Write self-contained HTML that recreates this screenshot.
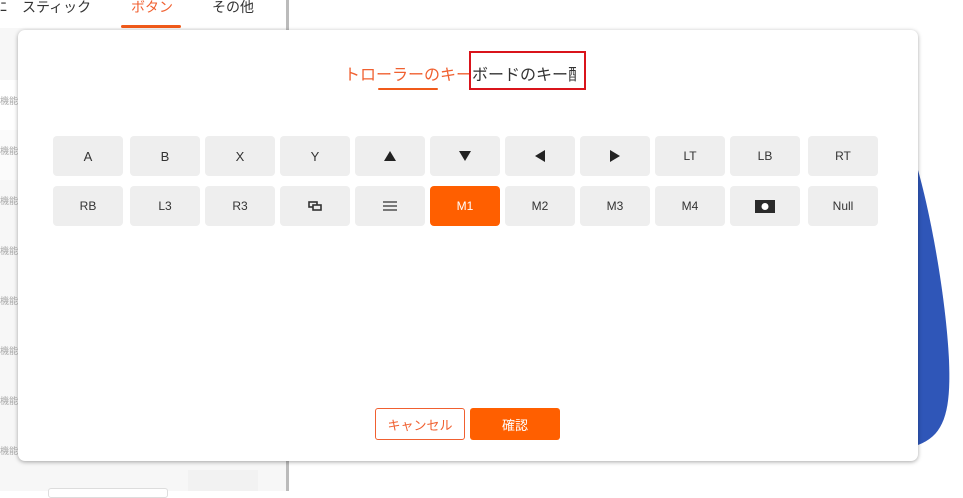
<!DOCTYPE html>
<html><head><meta charset="utf-8"><style>
*{margin:0;padding:0;box-sizing:border-box}
body{width:963px;height:491px;overflow:hidden;background:#fff;position:relative;font-family:"Liberation Sans","Noto Sans CJK JP",sans-serif}
.abs{position:absolute}
.tab{top:-1px;font-size:14px;color:#333;line-height:16px}
.lbl{left:0;font-size:9px;color:#aaa}
.btn{position:absolute;width:70px;height:40px;background:#eee;border-radius:4px;font-size:13px;color:#333;display:flex;align-items:center;justify-content:center}
</style></head><body>
<div class="abs" style="left:0;top:28px;width:287px;height:463px;background:#f7f7f7"></div>
<div class="abs" style="left:0;top:80px;width:287px;height:50px;background:#fff"></div>
<div class="abs" style="left:0;top:130px;width:287px;height:50px;background:#fbfbfb"></div>
<div class="abs" style="left:286px;top:0;width:3px;height:491px;background:#bbb"></div>
<div class="abs tab" style="left:0">ﾆ</div>
<div class="abs tab" style="left:22px">スティック</div>
<div class="abs tab" style="left:131px;color:#f06030">ボタン</div>
<div class="abs" style="left:121px;top:25px;width:60px;height:3px;background:#f05a1a;border-radius:2px"></div>
<div class="abs tab" style="left:212px">その他</div>
<div class="abs lbl" style="top:94px">機能の</div>
<div class="abs lbl" style="top:144px">機能の</div>
<div class="abs lbl" style="top:194px">機能の</div>
<div class="abs lbl" style="top:244px">機能の</div>
<div class="abs lbl" style="top:294px">機能の</div>
<div class="abs lbl" style="top:344px">機能の</div>
<div class="abs lbl" style="top:394px">機能の</div>
<div class="abs lbl" style="top:444px">機能の</div>
<div class="abs" style="left:48px;top:488px;width:120px;height:10px;border:1px solid #ddd;border-radius:3px;background:#fff"></div>
<div class="abs" style="left:188px;top:470px;width:70px;height:21px;background:#f2f2f2"></div>
<svg class="abs" style="left:900px;top:160px" width="63" height="290"><path d="M18 10 C32 60 46 140 49 200 C51 250 45 275 18 285 Z" fill="#2f56b8"/></svg>
<div class="abs" style="left:18px;top:30px;width:900px;height:431px;background:#fff;border-radius:7px;box-shadow:0 1px 4px rgba(0,0,0,.35)">
</div>
<div class="abs" style="left:344px;top:61px;font-size:16px;color:#f06030;white-space:nowrap">トローラーのキー<span style="color:#333">ボードのキー</span><span style="color:#333;display:inline-block;width:8px;overflow:hidden;vertical-align:top">配</span></div>
<div class="abs" style="left:469px;top:51px;width:117px;height:39px;border:2px solid #d9141b"></div>
<div class="abs" style="left:378px;top:88px;width:60px;height:2px;background:#f05a1a;border-radius:1px"></div>
<div class="btn" style="left:53px;top:136px">A</div>
<div class="btn" style="left:130px;top:136px">B</div>
<div class="btn" style="left:205px;top:136px">X</div>
<div class="btn" style="left:280px;top:136px">Y</div>
<div class="btn" style="left:355px;top:136px"><svg width="12" height="10"><path d="M6 0L12 10H0Z" fill="#222"/></svg></div>
<div class="btn" style="left:430px;top:136px"><svg width="12" height="10"><path d="M0 0H12L6 10Z" fill="#222"/></svg></div>
<div class="btn" style="left:505px;top:136px"><svg width="10" height="12"><path d="M10 0V12L0 6Z" fill="#222"/></svg></div>
<div class="btn" style="left:580px;top:136px"><svg width="10" height="12"><path d="M0 0V12L10 6Z" fill="#222"/></svg></div>
<div class="btn" style="left:655px;top:136px;font-size:12px">LT</div>
<div class="btn" style="left:730px;top:136px;font-size:12px">LB</div>
<div class="btn" style="left:808px;top:136px;font-size:12px">RT</div>
<div class="btn" style="left:53px;top:186px;font-size:12px">RB</div>
<div class="btn" style="left:130px;top:186px;font-size:12px">L3</div>
<div class="btn" style="left:205px;top:186px;font-size:12px">R3</div>
<div class="btn" style="left:280px;top:186px"><svg width="14" height="10"><rect x="1" y="1" width="8" height="5" fill="none" stroke="#333" stroke-width="1.6"/><rect x="5" y="4" width="8" height="5" fill="#eee" stroke="#333" stroke-width="1.6"/></svg></div>
<div class="btn" style="left:355px;top:186px"><svg width="14" height="10"><path d="M0 1H14M0 5H14M0 9H14" stroke="#333" stroke-width="1.3"/></svg></div>
<div class="btn" style="left:430px;top:186px;background:#ff5f00;color:#fff;font-size:12px">M1</div>
<div class="btn" style="left:505px;top:186px;font-size:12px">M2</div>
<div class="btn" style="left:580px;top:186px;font-size:12px">M3</div>
<div class="btn" style="left:655px;top:186px;font-size:12px">M4</div>
<div class="btn" style="left:730px;top:186px"><svg width="20" height="13"><rect width="20" height="13" fill="#2a2a2a"/><circle cx="10" cy="6.5" r="3.5" fill="#fff"/></svg></div>
<div class="btn" style="left:808px;top:186px;font-size:12px">Null</div>
<div class="abs" style="left:375px;top:408px;width:90px;height:32px;border:1px solid #f06030;border-radius:3px;color:#f06030;font-size:13px;display:flex;align-items:center;justify-content:center">キャンセル</div>
<div class="abs" style="left:470px;top:408px;width:90px;height:32px;background:#ff5f00;border-radius:3px;color:#fff;font-size:13px;display:flex;align-items:center;justify-content:center">確認</div>
</body></html>
